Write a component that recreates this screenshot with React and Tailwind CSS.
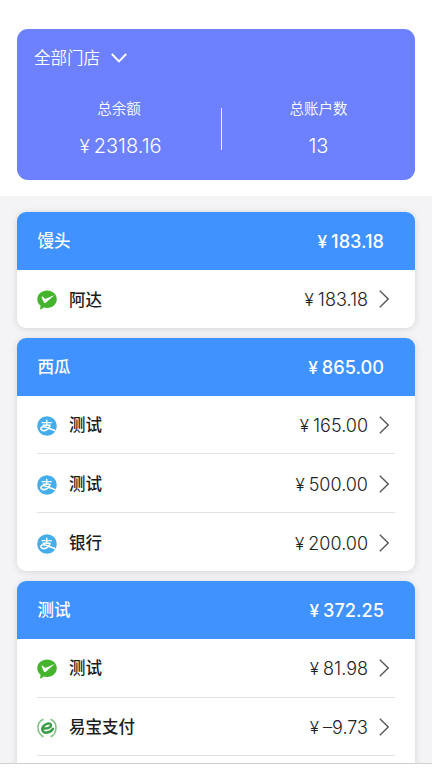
import React from 'react';

const groups = [
  {
    name: '馒头',
    total: '183.18',
    accounts: [{ type: 'wechat', name: '阿达', amount: '183.18' }],
  },
  {
    name: '西瓜',
    total: '865.00',
    accounts: [
      { type: 'alipay', name: '测试', amount: '165.00' },
      { type: 'alipay', name: '测试', amount: '500.00' },
      { type: 'alipay', name: '银行', amount: '200.00' },
    ],
  },
  {
    name: '测试',
    total: '372.25',
    hasMore: true,
    accounts: [
      { type: 'wechat', name: '测试', amount: '81.98' },
      { type: 'yeepay', name: '易宝支付', amount: '–9.73' },
    ],
  },
];

const WechatPayIcon = () => (
  <svg viewBox="0 0 20 20" className="h-5 w-5">
    <path
      d="M10.200.5C4.700.5.300 4.300.300 9.200c0 2.700 1.300 5 3.300 6.600l-.5 3.100c-.1.500.3.700.7.500l3-1.900c1 .3 2.200.4 3.400.4 5.400 0 9.600-3.900 9.600-8.700S15.600.5 10.200.5Z"
      fill="#43b42c"
    />
    <path d="M4.900 6.700c.5-.4.900-.2 1.300.2L8.200 9 17.600 5 8.800 12.700c-.7.600-1.500.5-1.900-.3L4.700 7.800c-.2-.5-.2-.8.200-1.100Z" fill="#fff" />
  </svg>
);

const AlipayIcon = () => (
  <svg viewBox="0 0 20 20" className="h-5 w-5" fill="none">
    <circle cx="10" cy="10" r="9.800" fill="#45aeea" />
    <path d="M4.600 6.600H14.800M9.700 3.800v5.300M5.600 9.300h7.800" stroke="#fff" strokeWidth="1.400" />
    <path
      d="M13.200 9.300c-1.100 2.900-3.300 5.300-6.200 5.300-1.900 0-3.100-.8-3.100-2 0-1.300 1.300-2 2.800-1.900 3.100.2 6.100 2.300 11.800 4"
      stroke="#fff"
      strokeWidth="1.600"
    />
  </svg>
);

const YeepayIcon = () => (
  <svg viewBox="0 0 20 20" className="h-5 w-5" fill="none" strokeLinecap="round">
    <path d="M6 1.500C2.500 3 .9 6.400 1 9.800c.1 3.900 2 6.900 4.900 8.700" stroke="#7fc182" strokeWidth="1.500" />
    <path d="M14 1.500c3.400 1.500 5 4.900 5 8.300 0 4-1.900 7.200-4.900 8.700" stroke="#7fc182" strokeWidth="1.500" />
    <path
      d="M7.200 10.500c3 .2 6.500-.9 6.800-3 .2-1.600-1.500-2.400-3.500-1.900-2.900.7-5.400 3.300-5.300 5.700.1 2.600 2.400 3.800 5 3.300 2.300-.4 4.500-1.900 5.700-3.800"
      stroke="#3a9c45"
      strokeWidth="2.500"
    />
  </svg>
);

const AccountIcon = ({ type }) => {
  if (type === 'alipay') return <AlipayIcon />;
  if (type === 'yeepay') return <YeepayIcon />;
  return <WechatPayIcon />;
};

const Money = ({ value }) => (
  <span className="flex items-baseline gap-1">
    <span className="text-[0.950em]">¥</span>
    <span>{value}</span>
  </span>
);

const AccountRow = ({ account }) => (
  <div className="mx-5 flex h-[58.500px] items-center border-b border-[#e2e2e4] last:border-b-0">
    <div className="mt-[3px] h-5 w-5 shrink-0">
      <AccountIcon type={account.type} />
    </div>
    <span className="ml-3 pt-[2px] text-[16.500px] font-medium text-[#1c1c1c]">{account.name}</span>
    <div className="ml-auto pt-[2px] text-[18px] font-[350] text-[#222]">
      <Money value={account.amount} />
    </div>
    <svg viewBox="0 0 10 18" className="ml-[11px] mr-[6px] mt-px h-[18px] w-[10px]" fill="none">
      <path d="M.8.800 9.200 9 .8 17.200" stroke="#555" strokeWidth="1.300" />
    </svg>
  </div>
);

const GroupCard = ({ group }) => (
  <section className="shrink-0 overflow-hidden rounded-[9px] bg-white shadow-[0_1px_7px_rgba(0,0,0,0.130)]">
    <div className="flex h-[57.800px] items-center justify-between bg-[#3f92ff] pl-[20.500px] pr-[31px] pt-px text-white">
      <span className="text-[16.500px] font-medium">{group.name}</span>
      <div className="text-[18.200px] font-medium">
        <Money value={group.total} />
      </div>
    </div>
    {group.accounts.map((account, i) => (
      <AccountRow key={i} account={account} />
    ))}
    {group.hasMore && <div className="h-[58px]" />}
  </section>
);

const App = () => (
  <div className="flex h-[768px] w-[432px] flex-col overflow-hidden bg-[#f4f4f6] font-[Inter,'Noto_Sans_CJK_SC',sans-serif]">
    <header className="h-[196px] shrink-0 bg-white px-[17px] pt-[29px]">
      <div className="h-[151px] w-[398px] rounded-[11px] bg-[#6d81ff] pt-4 text-white">
        <div className="flex h-[26px] items-center pl-[17px]">
          <span className="pt-px text-[16.500px] font-[350]">全部门店</span>
          <svg viewBox="0 0 16 10" className="ml-[11px] h-[10px] w-4" fill="none">
            <path d="m.8 1 7.200 7.500L15.200 1" stroke="#fff" strokeWidth="1.900" />
          </svg>
        </div>
        <div className="mt-[26px] flex">
          <div className="flex w-[204px] flex-col items-center">
            <span className="text-[14.500px] leading-6 font-[350]">总余额</span>
            <div className="mt-[11px] pl-[3px] text-[20px] leading-7 font-[350]">
              <Money value="2318.16" />
            </div>
          </div>
          <div className="mt-[11px] h-[42px] w-px bg-white/90" />
          <div className="flex w-[193px] flex-col items-center">
            <span className="text-[14.500px] leading-6 font-[350]">总账户数</span>
            <span className="mt-[11px] text-[20px] leading-7 font-[350]">13</span>
          </div>
        </div>
      </div>
    </header>

    <main className="flex min-h-0 flex-1 flex-col gap-[9.900px] overflow-hidden px-[17px] pt-[15.900px]">
      {groups.map((group) => (
        <GroupCard key={group.name} group={group} />
      ))}
    </main>
    <footer className="h-[5px] shrink-0 border-t border-[#d0d0d2] bg-white" />
  </div>
);

export default App;
